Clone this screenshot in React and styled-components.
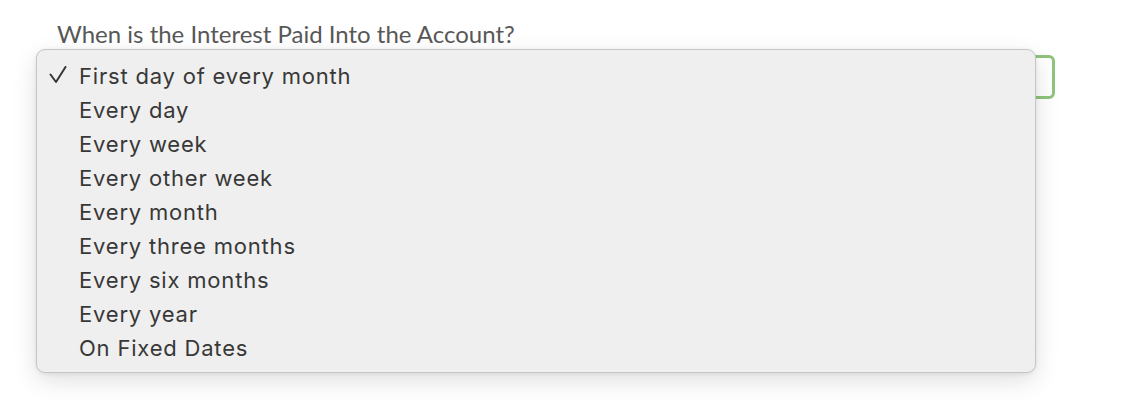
import styled, { createGlobalStyle } from "styled-components";

const GlobalStyle = createGlobalStyle`
    body {
        margin: 0;
        background: #ffffff;
    }
`;

const options = [
    "First day of every month",
    "Every day",
    "Every week",
    "Every other week",
    "Every month",
    "Every three months",
    "Every six months",
    "Every year",
    "On Fixed Dates",
];

const CheckIcon = () => (
    <svg width="18" height="18" viewBox="0 0 18 18" fill="none">
        <polyline
            points="1.5,8.5 7,16 16.5,1"
            stroke="#363636"
            strokeWidth="2"
            strokeLinecap="round"
            strokeLinejoin="round"
        />
    </svg>
);

const App = () => {
    const selected = 0;

    return (
        <>
            <GlobalStyle />
            <Page>
                <Field>
                    <Label>When is the Interest Paid Into the Account?</Label>
                    <SelectBox />
                    <Menu>
                        {options.map((option, index) => (
                            <Item key={option}>
                                <Check>{index === selected && <CheckIcon />}</Check>
                                {option}
                            </Item>
                        ))}
                    </Menu>
                </Field>
            </Page>
        </>
    );
};

export default App;

const Page = styled.div`
    width: 1134px;
    height: 400px;
    padding: 19px 0 0 57px;
    box-sizing: border-box;
    background: #ffffff;
`;

const Field = styled.div`
    position: relative;
    width: 998px;
`;

const Label = styled.div`
    font-family: Lato, "Liberation Sans", sans-serif;
    font-size: 24px;
    line-height: 30px;
    color: #585858;
`;

const SelectBox = styled.div`
    margin-top: 6px;
    height: 44px;
    border: 3px solid #8fc47c;
    border-radius: 6px;
    box-sizing: border-box;
    background: #ffffff;
`;

const Menu = styled.div`
    position: absolute;
    top: 30px;
    left: -21px;
    width: 1000px;
    padding: 9px 0 7px;
    box-sizing: border-box;
    background: #efefef;
    border: 1px solid #c6c6c6;
    border-radius: 9px;
    box-shadow: 0 8px 24px rgba(0, 0, 0, 0.12), 0 1px 4px rgba(0, 0, 0, 0.08);
`;

const Item = styled.div`
    display: flex;
    align-items: center;
    height: 34px;
    font-family: Inter, "Noto Sans", sans-serif;
    font-size: 22px;
    letter-spacing: 0.8px;
    color: #383838;
`;

const Check = styled.span`
    display: flex;
    align-items: center;
    width: 42px;
    height: 34px;
    padding: 0 0 2px 12px;
    box-sizing: border-box;
`;
